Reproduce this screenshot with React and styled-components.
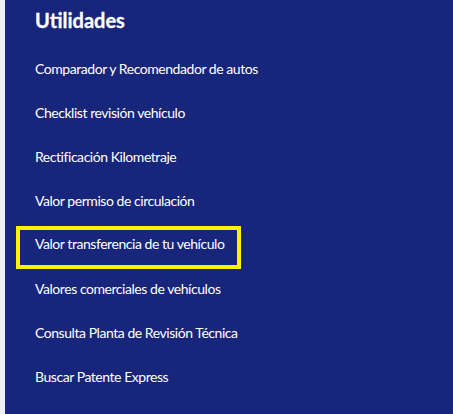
import React from "react";
import styled, { createGlobalStyle } from "styled-components";

const Global = createGlobalStyle`
  html, body { margin: 0; padding: 0; }
  body { background: #eef0f5; }
`;

const utilities = [
  "Comparador y Recomendador de autos",
  "Checklist revisión vehículo",
  "Rectificación Kilometraje",
  "Valor permiso de circulación",
  "Valor transferencia de tu vehículo",
  "Valores comerciales de vehículos",
  "Consulta Planta de Revisión Técnica",
  "Buscar Patente Express",
];

const FOCUSED = 4;

export default function App() {
  return (
    <>
      <Global />
      <Styles.Page>
        <Styles.Panel>
          <Styles.Heading>Utilidades</Styles.Heading>
          <Styles.List>
            {utilities.map((label, i) => (
              <Styles.Item key={label}>
                <Styles.Link href="#" $focused={i === FOCUSED}>
                  {label}
                </Styles.Link>
              </Styles.Item>
            ))}
          </Styles.List>
        </Styles.Panel>
      </Styles.Page>
    </>
  );
}

const Styles = {
  Page: styled.div`
    display: flex;
    height: 414px;
    padding-left: 5px;
    background: #eef0f5;
  `,
  Panel: styled.nav`
    flex: 1;
    background: #17257a;
    padding-left: 30px;
    font-family: "Lato", "Noto Sans", sans-serif;
    color: #ffffff;
  `,
  Heading: styled.h3`
    margin: 0 0 13px;
    padding-top: 6px;
    font-size: 20px;
    font-weight: 700;
    line-height: 28px;
    -webkit-text-stroke: 0.3px #ffffff;
  `,
  List: styled.ul`
    list-style: none;
    margin: 0;
    padding: 0;
  `,
  Item: styled.li`
    height: 44px;
  `,
  Link: styled.a`
    display: inline-block;
    box-sizing: border-box;
    color: #ffffff;
    text-decoration: none;
    font-size: 14px;
    letter-spacing: -0.45px;
    line-height: 44px;
    ${(p) =>
      p.$focused &&
      `
      height: 43px;
      margin: 3px 0 0 -19px;
      padding: 0 13px 7px 15px;
      line-height: 28px;
      border: 4px solid #fff200;
    `}
  `,
};
